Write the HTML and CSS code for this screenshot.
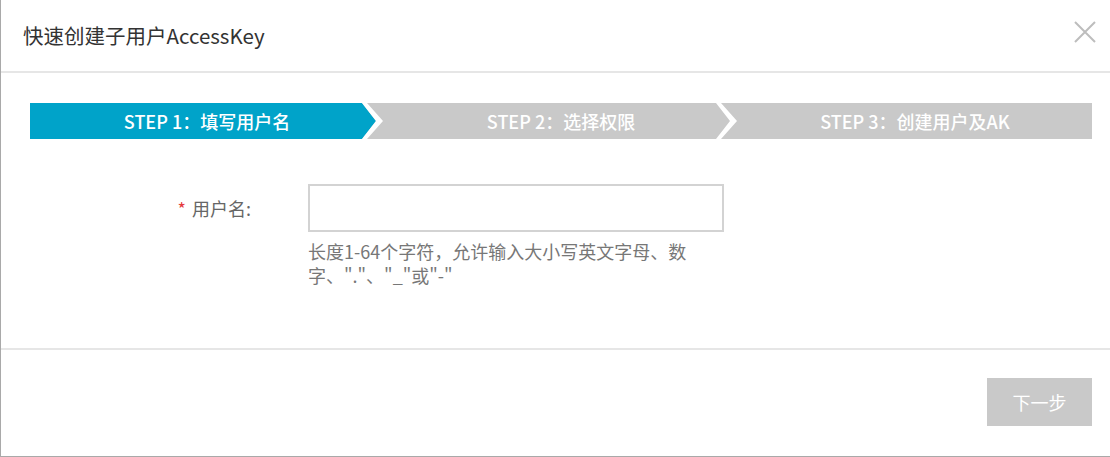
FILE: index.html
```html
<!DOCTYPE html>
<html lang="zh-CN">
<head>
<meta charset="utf-8">
<title>快速创建子用户AccessKey</title>
<link rel="stylesheet" href="styles.css">
</head>
<body>
<div class="dialog">
  <div class="header">
    <div class="title">快速创建子用户AccessKey</div>
    <div class="close" aria-label="关闭">
      <svg width="22" height="22" viewBox="0 0 22 22"><path d="M1 1L21 21M21 1L1 21" stroke="#bdbdbd" stroke-width="2" fill="none"/></svg>
    </div>
  </div>
  <div class="body">
    <div class="steps">
      <div class="step active"><span>STEP 1：填写用户名</span></div>
      <div class="step"><span>STEP 2：选择权限</span></div>
      <div class="step"><span>STEP 3：创建用户及AK</span></div>
    </div>
    <div class="form-row">
      <label class="label"><span class="req">*</span> 用户名:</label>
      <div class="field">
        <input class="input" type="text">
        <div class="help">长度1-64个字符，允许输入大小写英文字母、数字、"."、"_"或"-"</div>
      </div>
    </div>
  </div>
  <div class="footer">
    <button class="btn" type="button">下一步</button>
  </div>
</div>
</body>
</html>
```

FILE: styles.css
```css
html, body {
  margin: 0;
  padding: 0;
  background: #fff;
}
body {
  font-family: "Noto Sans CJK SC", "Noto Sans", sans-serif;
  color: #333;
}
.dialog {
  width: 1110px;
  height: 457px;
  box-sizing: border-box;
  border-left: 1px solid #a9a9a9;
  border-bottom: 1px solid #a9a9a9;
  display: flex;
  flex-direction: column;
}
.header {
  height: 71px;
  border-bottom: 2px solid #e6e6e6;
  display: flex;
  align-items: center;
  justify-content: space-between;
  padding: 0 14px 0 22px;
  flex-shrink: 0;
}
.title {
  font-size: 20.5px;
  color: #333;
  line-height: 1;
}
.close {
  width: 22px;
  height: 22px;
  display: flex;
  margin-top: -8px;
}
.body {
  height: 275px;
  box-sizing: border-box;
  padding: 30px 18px 0 29px;
  flex-shrink: 0;
}
.steps {
  display: flex;
  height: 36px;
  background: #c9c9c9;
}
.step {
  flex: 1;
  position: relative;
  display: flex;
  align-items: center;
  justify-content: center;
  color: #fff;
  font-size: 18px;
  font-weight: 500;
}
.step span {
  position: relative;
  z-index: 2;
}
.step.active::before {
  content: "";
  position: absolute;
  inset: 0;
  background: #00a3c9;
  clip-path: polygon(0 0, calc(100% - 22px) 0, calc(100% - 8px) 50%, calc(100% - 22px) 100%, 0 100%);
  z-index: 1;
}
.step:not(:last-child)::after {
  content: "";
  position: absolute;
  top: 0;
  right: 0;
  width: 22px;
  height: 36px;
  background: #fff;
  clip-path: polygon(0 0, 5px 0, 21px 50%, 5px 100%, 0 100%, 14px 50%);
  z-index: 1;
}
.form-row {
  display: grid;
  grid-template-columns: 278px 1fr;
  margin-top: 45px;
}
.label {
  height: 48px;
  display: flex;
  align-items: center;
  justify-content: flex-end;
  padding-right: 57px;
  font-size: 18px;
  color: #666;
}
.req {
  color: #e4393c;
  margin-right: 6px;
}
.field {
  display: flex;
  flex-direction: column;
}
.input {
  width: 416px;
  height: 48px;
  box-sizing: border-box;
  border: 2px solid #d3d3d3;
  margin: 0;
  padding: 0 10px;
  font-size: 16px;
  outline: none;
}
.help {
  width: 392px;
  margin-top: 7px;
  font-size: 18px;
  line-height: 24px;
  color: #777;
}
.footer {
  border-top: 2px solid #e6e6e6;
  flex: 1;
  display: flex;
  justify-content: flex-end;
  align-items: flex-start;
  padding: 28px 18px 0 0;
}
.btn {
  width: 105px;
  height: 48px;
  border: none;
  background: #c9c9c9;
  color: #fff;
  font-family: "Noto Sans CJK SC", sans-serif;
  font-size: 18px;
  padding: 0;
}
```
